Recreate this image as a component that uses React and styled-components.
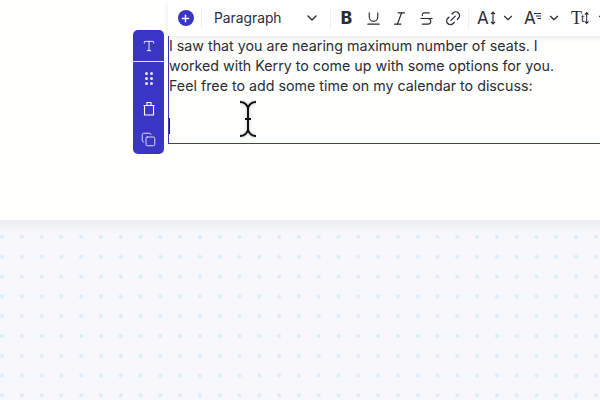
import React from "react";
import styled, { createGlobalStyle } from "styled-components";
import { ChevronDown, Copy, Italic, Link2, Plus, Strikethrough, Type, Underline } from "lucide-react";

const GlobalStyle = createGlobalStyle`
  html, body {
    margin: 0;
    padding: 0;
    background: #ffffff;
    overflow: hidden;
  }
  body {
    width: 600px;
    height: 400px;
    font-family: Inter, "Liberation Sans", sans-serif;
  }
`;

const formatIcons = [
  { Icon: Underline, stroke: 1.6, size: 17 },
  { Icon: Italic, stroke: 1.7, size: 17 },
  { Icon: Strikethrough, stroke: 1.6, size: 17 },
  { Icon: Link2, stroke: 1.8, size: 18, rotate: true },
];

const Arrows = () => (
  <svg width="6" height="14" viewBox="0 0 6 14" fill="none" stroke="#2a2d35" strokeWidth="1.15">
    <path d="M3 1v12M1 3.2 3 1l2 2.2M1 10.8 3 13l2-2.2" />
  </svg>
);

const Lines = () => (
  <svg width="7" height="6" viewBox="0 0 7 6" fill="none" stroke="#2a2d35" strokeWidth="1">
    <path d="M0 .5h7M2 3h5M3.5 5.5H7" />
  </svg>
);

const Bucket = () => (
  <svg width="14" height="15" viewBox="0 0 14 15" fill="none" stroke="currentColor" strokeWidth="1.1">
    <path d="M2.5 4.5h9v9.5h-9zM1.5 4.5h11M5 4.5V1.5h4v3" />
  </svg>
);

export default function App() {
  return (
    <Page>
      <GlobalStyle />
      <Canvas>
        <SidePanel>
          <PanelTop>
            <Type size={14} strokeWidth={1.5} />
          </PanelTop>
          <PanelTools>
            <DragDots>
              {Array.from({ length: 6 }).map((_, i) => (
                <Dot key={i} />
              ))}
            </DragDots>
            <Bucket />
            <Copy size={15} strokeWidth={1.3} />
          </PanelTools>
        </SidePanel>
        <Editor>
          <Toolbar>
            <AddSlot>
              <AddButton>
                <Plus size={11} strokeWidth={3} />
              </AddButton>
            </AddSlot>
            <Divider />
            <ParagraphSelect>
              <span>Paragraph</span>
              <ChevronDown size={16} strokeWidth={2} />
            </ParagraphSelect>
            <Divider />
            <FormatGroup>
              <FormatSlot>
                <BoldMark>B</BoldMark>
              </FormatSlot>
              {formatIcons.map(({ Icon, stroke, size, rotate }, i) => (
                <FormatSlot key={i} $rotate={rotate}>
                  <Icon size={size} strokeWidth={stroke} />
                </FormatSlot>
              ))}
            </FormatGroup>
            <Divider />
            <TextTool>
              <BigLetter>A</BigLetter>
              <Arrows />
              <SmallChevron $gap={4} size={14} strokeWidth={2} />
            </TextTool>
            <TextTool>
              <BigLetter>A</BigLetter>
              <LinesWrap>
                <Lines />
              </LinesWrap>
              <SmallChevron $gap={5} size={14} strokeWidth={2} />
            </TextTool>
            <TextTool>
              <SerifLetter>T</SerifLetter>
              <SmallLetter>t</SmallLetter>
              <Arrows />
              <SmallChevron $gap={6} size={14} strokeWidth={2} />
            </TextTool>
          </Toolbar>
          <TextBox>
            <p>I saw that you are nearing maximum number of seats. I</p>
            <p>worked with Kerry to come up with some options for you.</p>
            <p>Feel free to add some time on my calendar to discuss:</p>
            <Caret />
          </TextBox>
          <MouseCursor width="22" height="38" viewBox="0 0 22 38" fill="none">
            <path
              d="M3 2c5 0 7 3 8 6 1-3 3-6 8-6M11 8v22M8 19h6M3 36c5 0 7-3 8-6 1 3 3 6 8 6"
              stroke="#e6e6e8"
              strokeWidth="5"
            />
            <path
              d="M3 2c5 0 7 3 8 6 1-3 3-6 8-6M11 8v22M8 19h6M3 36c5 0 7-3 8-6 1 3 3 6 8 6"
              stroke="#111111"
              strokeWidth="2"
            />
          </MouseCursor>
        </Editor>
      </Canvas>
      <DottedArea />
    </Page>
  );
}

const Page = styled.div`
  width: 600px;
  height: 400px;
  display: flex;
  flex-direction: column;
  overflow: hidden;
`;

const Canvas = styled.div`
  height: 220px;
  flex: none;
  display: flex;
  align-items: flex-start;
  padding-left: 133px;
  gap: 4px;
  background: #fffffe;
`;

const SidePanel = styled.div`
  width: 31px;
  height: 124px;
  margin-top: 30px;
  flex: none;
  background: #3a35c4;
  border-radius: 5px;
  color: #ffffff;
  display: flex;
  flex-direction: column;
  align-items: center;
`;

const PanelTop = styled.div`
  width: 100%;
  height: 31px;
  flex: none;
  display: flex;
  align-items: center;
  justify-content: center;
  border-bottom: 1px solid #e4e4f6;
`;

const PanelTools = styled.div`
  flex: 1;
  display: flex;
  flex-direction: column;
  align-items: center;
  gap: 16px;
  padding-top: 10px;
`;

const DragDots = styled.div`
  display: grid;
  grid-template-columns: repeat(2, 3px);
  gap: 2px 2px;
`;

const Dot = styled.i`
  width: 3px;
  height: 3px;
  border-radius: 50%;
  background: #e8e8fa;
`;

const Editor = styled.div`
  position: relative;
  flex: 1;
  min-width: 0;
  display: flex;
  flex-direction: column;
`;

const Toolbar = styled.div`
  height: 36px;
  width: 460px;
  flex: none;
  display: flex;
  align-items: center;
  background: #ffffff;
  color: #2a2d35;
  box-shadow: 0 2px 5px rgba(40, 45, 70, 0.1);
`;

const AddSlot = styled.div`
  width: 33px;
  flex: none;
  display: flex;
  justify-content: center;
  padding-left: 2px;
  box-sizing: border-box;
`;

const AddButton = styled.div`
  width: 16px;
  height: 16px;
  border-radius: 50%;
  background: #3a35c4;
  color: #ffffff;
  display: flex;
  align-items: center;
  justify-content: center;
`;

const Divider = styled.div`
  width: 1px;
  height: 22px;
  flex: none;
  background: #eef0f3;
`;

const ParagraphSelect = styled.div`
  width: 128px;
  flex: none;
  box-sizing: border-box;
  padding: 0 10px 0 12px;
  display: flex;
  align-items: center;
  justify-content: space-between;
  font-size: 13.8px;
  color: #2a2d35;
`;

const FormatGroup = styled.div`
  display: flex;
  flex: none;
  width: 137px;
  padding-left: 2px;
  box-sizing: border-box;
`;

const FormatSlot = styled.div`
  width: 26.7px;
  height: 20px;
  flex: none;
  display: flex;
  align-items: center;
  justify-content: center;
  transform: ${(p) => (p.$rotate ? "rotate(-45deg)" : "none")};
`;

const BoldMark = styled.span`
  font-size: 17px;
  font-weight: 800;
  line-height: 20px;
`;

const TextTool = styled.div`
  width: 47px;
  flex: none;
  box-sizing: border-box;
  padding-left: 8px;
  display: flex;
  align-items: center;
  gap: 1px;
`;

const BigLetter = styled.span`
  font-size: 17px;
  line-height: 20px;
  color: #2a2d35;
`;

const SerifLetter = styled.span`
  font-family: "Liberation Serif", serif;
  font-size: 18px;
  line-height: 20px;
  color: #2a2d35;
`;

const SmallLetter = styled.span`
  font-family: "Liberation Serif", serif;
  font-size: 13px;
  line-height: 20px;
  margin: 0 -2px 0 -2px;
  color: #2a2d35;
`;

const LinesWrap = styled.div`
  display: flex;
  margin: -5px 0 0 -3px;
`;

const SmallChevron = styled(ChevronDown)`
  margin-left: ${(p) => p.$gap}px;
  flex: none;
`;

const TextBox = styled.div`
  position: relative;
  height: 108px;
  box-sizing: border-box;
  border-left: 1px solid #3a35c4;
  border-bottom: 1px solid #3a35c4;
  padding: 0;
  font-size: 14.25px;
  line-height: 20px;
  color: #2a2d35;
  white-space: nowrap;

  p {
    margin: 0;
  }
`;

const Caret = styled.div`
  position: absolute;
  left: 0;
  top: 82px;
  width: 1px;
  height: 16px;
  background: #20242e;
`;

const MouseCursor = styled.svg`
  position: absolute;
  left: 69px;
  top: 100px;
`;

const DottedArea = styled.div`
  flex: 1;
  background-color: #f8f8fc;
  background-image: linear-gradient(to bottom, #ecedf2 0, rgba(240, 242, 246, 0.6) 8px, rgba(248, 248, 252, 0) 14px),
    radial-gradient(circle at 2px 2px, #dcedfa 1.6px, transparent 2.4px);
  background-size: 100% 100%, 19.8px 19.8px;
  background-position: 0 0, 0px 15px;
`;
